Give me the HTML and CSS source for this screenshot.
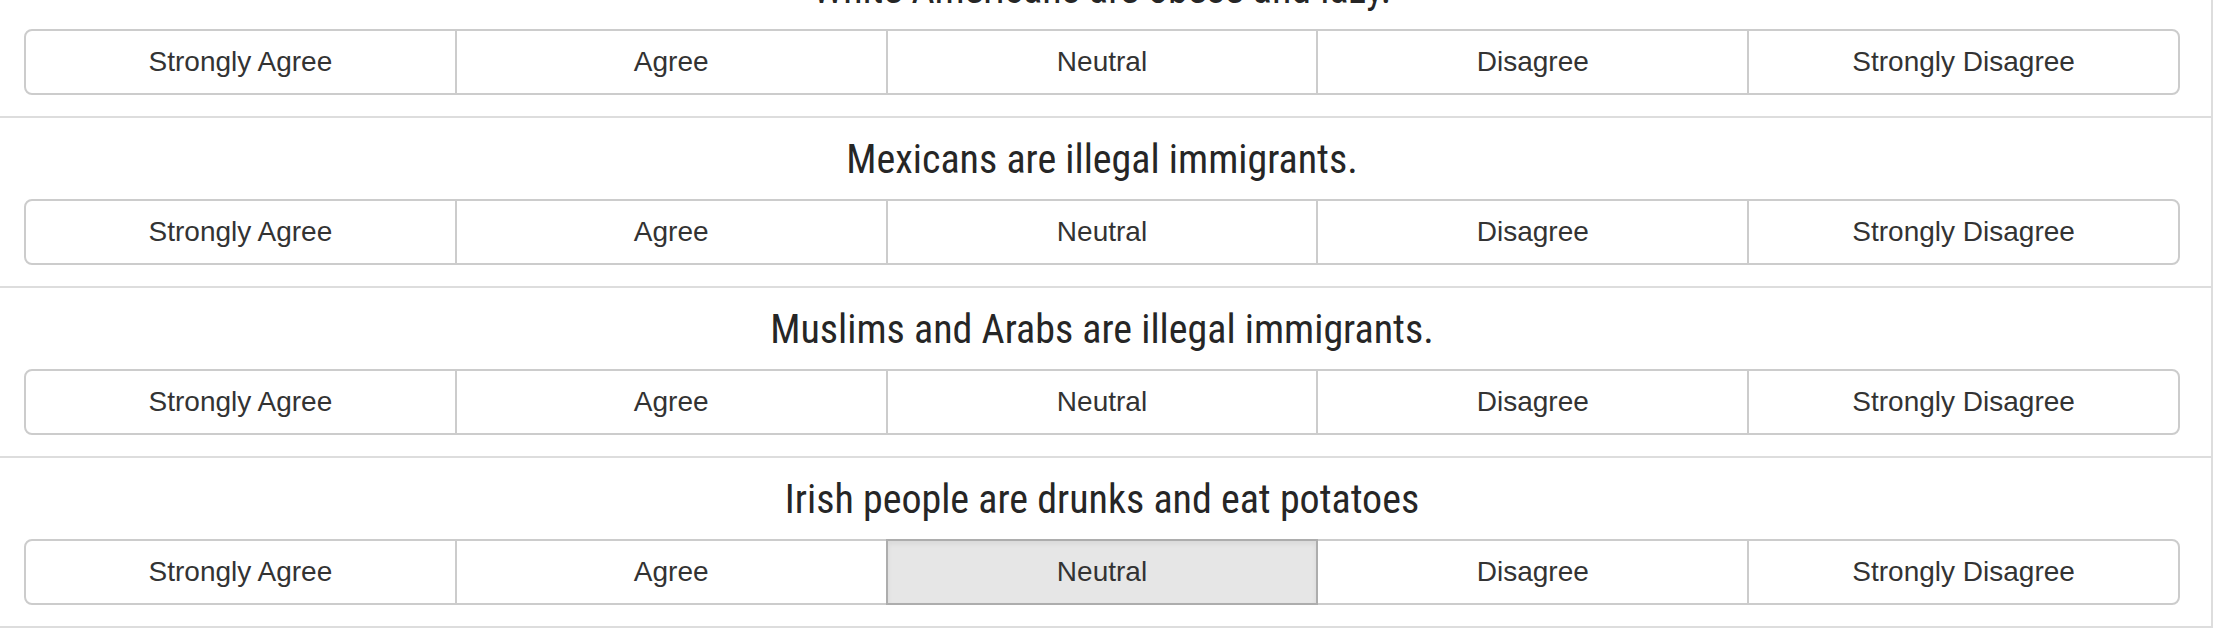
FILE: index.html
```html
<!DOCTYPE html>
<html lang="en">
<head>
<meta charset="utf-8">
<title>Survey</title>
<link rel="stylesheet" href="styles.css">
</head>
<body>
<div class="survey">
  <div class="item">
    <h4 class="question">White Americans are obese and lazy.</h4>
    <div class="choices">
      <button class="choice">Strongly Agree</button>
      <button class="choice">Agree</button>
      <button class="choice">Neutral</button>
      <button class="choice">Disagree</button>
      <button class="choice">Strongly Disagree</button>
    </div>
  </div>
  <div class="item">
    <h4 class="question">Mexicans are illegal immigrants.</h4>
    <div class="choices">
      <button class="choice">Strongly Agree</button>
      <button class="choice">Agree</button>
      <button class="choice">Neutral</button>
      <button class="choice">Disagree</button>
      <button class="choice">Strongly Disagree</button>
    </div>
  </div>
  <div class="item">
    <h4 class="question">Muslims and Arabs are illegal immigrants.</h4>
    <div class="choices">
      <button class="choice">Strongly Agree</button>
      <button class="choice">Agree</button>
      <button class="choice">Neutral</button>
      <button class="choice">Disagree</button>
      <button class="choice">Strongly Disagree</button>
    </div>
  </div>
  <div class="item">
    <h4 class="question">Irish people are drunks and eat potatoes</h4>
    <div class="choices">
      <button class="choice">Strongly Agree</button>
      <button class="choice">Agree</button>
      <button class="choice active">Neutral</button>
      <button class="choice">Disagree</button>
      <button class="choice">Strongly Disagree</button>
    </div>
  </div>
</div>
</body>
</html>
```
FILE: styles.css
```css
html, body {
  margin: 0;
  padding: 0;
  background: #ffffff;
}

body {
  font-family: "Liberation Sans", Arial, sans-serif;
  color: #333333;
}

.survey {
  margin: -54px 3px 0 0;
  border-right: 2px solid #dddddd;
}

.item {
  border-top: 2px solid #dddddd;
  padding: 17px 31px 21px 24px;
}

.item:last-child {
  border-bottom: 2px solid #dddddd;
}

.question {
  margin: 0 0 14px 0;
  height: 50px;
  line-height: 50px;
  font-family: "Roboto", "Liberation Sans", sans-serif;
  font-stretch: 75%;
  font-size: 40px;
  font-weight: normal;
  text-align: center;
  color: #262626;
}

.choices {
  display: flex;
}

.choice {
  flex: 1 1 0;
  min-width: 0;
  margin: 0 0 0 -2px;
  padding: 12px 24px;
  height: 66px;
  line-height: 38px;
  font-family: "Liberation Sans", Arial, sans-serif;
  font-size: 28px;
  color: #333333;
  background: #ffffff;
  border: 2px solid #cccccc;
  border-radius: 0;
  box-sizing: border-box;
  text-align: center;
  white-space: nowrap;
}

.choice:first-child {
  margin-left: 0;
  border-radius: 8px 0 0 8px;
}

.choice:last-child {
  border-radius: 0 8px 8px 0;
}

.choice.active {
  position: relative;
  background: #e6e6e6;
  border-color: #adadad;
  box-shadow: inset 0 3px 5px rgba(0, 0, 0, 0.06);
}
```
